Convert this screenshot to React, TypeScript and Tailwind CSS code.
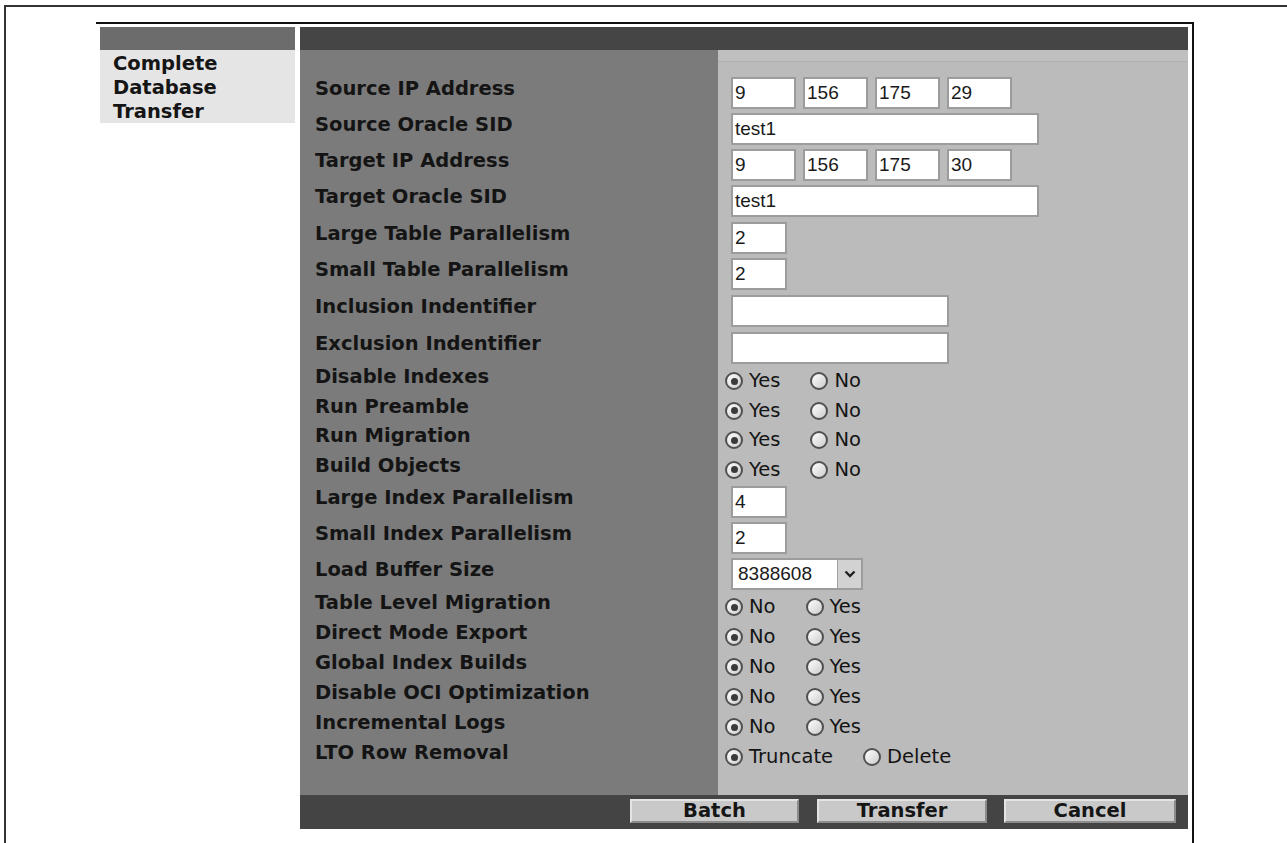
import React from "react";

const sans = "font-['DejaVu_Sans','Verdana',sans-serif]";
const arial = "font-['Liberation_Sans','Arial',sans-serif]";

function Box({ w, value }: { w: string; value: string }) {
  return (
    <input
      readOnly
      value={value}
      className={`${w} h-[32px] border-2 border-[#9c9c9c] bg-white pl-[2px] text-[19px] text-[#1a1a1a] ${arial} outline-none`}
    />
  );
}

function IpBoxes({ parts }: { parts: string[] }) {
  return (
    <div className="flex gap-[7px]">
      {parts.map((p, i) => (
        <Box key={i} w="w-[65px]" value={p} />
      ))}
    </div>
  );
}

function Radio({ checked, label }: { checked: boolean; label: string }) {
  return (
    <span className="flex items-center gap-[6px]">
      <span className="flex h-[18px] w-[18px] items-center justify-center rounded-full border-2 border-[#505050] bg-linear-to-br from-[#ffffff] to-[#cccccc]">
        {checked && <span className="h-[7px] w-[7px] rounded-full bg-[#3a3a3a]" />}
      </span>
      <span className={`${sans} text-[19.5px] leading-none text-[#141414]`}>{label}</span>
    </span>
  );
}

function RadioPair({ a, b }: { a: string; b: string }) {
  return (
    <div className="-ml-[6px] flex items-center gap-[30px]">
      <Radio checked label={a} />
      <Radio checked={false} label={b} />
    </div>
  );
}

function Select() {
  return (
    <div className="flex h-[32px] w-[132px] border-2 border-[#9c9c9c] bg-white">
      <span className={`flex-1 pl-[5px] text-[19px] leading-[28px] text-[#1a1a1a] ${arial}`}>8388608</span>
      <span className="flex w-[24px] items-center justify-center border-l border-[#a0a0a0] bg-[#d2d2d2]">
        <svg width="12" height="8" viewBox="0 0 12 8">
          <polyline points="1.5,1.5 6,6 10.5,1.5" fill="none" stroke="#222" strokeWidth="2.4" />
        </svg>
      </span>
    </div>
  );
}

type Row = { label: string; h: string; control: React.ReactNode };

const rows: Row[] = [
  { label: "Source IP Address", h: "h-[36px]", control: <IpBoxes parts={["9", "156", "175", "29"]} /> },
  { label: "Source Oracle SID", h: "h-[36px]", control: <Box w="w-[308px]" value="test1" /> },
  { label: "Target IP Address", h: "h-[36px]", control: <IpBoxes parts={["9", "156", "175", "30"]} /> },
  { label: "Target Oracle SID", h: "h-[36px]", control: <Box w="w-[308px]" value="test1" /> },
  { label: "Large Table Parallelism", h: "h-[37px]", control: <Box w="w-[56px]" value="2" /> },
  { label: "Small Table Parallelism", h: "h-[36px]", control: <Box w="w-[56px]" value="2" /> },
  { label: "Inclusion Indentifier", h: "h-[37px]", control: <Box w="w-[218px]" value="" /> },
  { label: "Exclusion Indentifier", h: "h-[37px]", control: <Box w="w-[218px]" value="" /> },
  { label: "Disable Indexes", h: "h-[30px]", control: <RadioPair a="Yes" b="No" /> },
  { label: "Run Preamble", h: "h-[29px]", control: <RadioPair a="Yes" b="No" /> },
  { label: "Run Migration", h: "h-[30px]", control: <RadioPair a="Yes" b="No" /> },
  { label: "Build Objects", h: "h-[29px]", control: <RadioPair a="Yes" b="No" /> },
  { label: "Large Index Parallelism", h: "h-[36px]", control: <Box w="w-[56px]" value="4" /> },
  { label: "Small Index Parallelism", h: "h-[36px]", control: <Box w="w-[56px]" value="2" /> },
  { label: "Load Buffer Size", h: "h-[36px]", control: <Select /> },
  { label: "Table Level Migration", h: "h-[30px]", control: <RadioPair a="No" b="Yes" /> },
  { label: "Direct Mode Export", h: "h-[30px]", control: <RadioPair a="No" b="Yes" /> },
  { label: "Global Index Builds", h: "h-[30px]", control: <RadioPair a="No" b="Yes" /> },
  { label: "Disable OCI Optimization", h: "h-[30px]", control: <RadioPair a="No" b="Yes" /> },
  { label: "Incremental Logs", h: "h-[30px]", control: <RadioPair a="No" b="Yes" /> },
  { label: "LTO Row Removal", h: "h-[30px]", control: <RadioPair a="Truncate" b="Delete" /> },
];

function Button({ w, children }: { w: string; children: React.ReactNode }) {
  return (
    <div
      className={`${w} flex h-[24px] items-center justify-center border-2 border-t-[#e4e4e4] border-l-[#e4e4e4] border-b-[#8c8c8c] border-r-[#8c8c8c] bg-[#c9c9c9] ${sans} text-[19.5px] font-bold leading-none text-[#151515]`}
    >
      {children}
    </div>
  );
}

export default function App() {
  return (
    <div className="h-[843px] w-[1287px] overflow-hidden bg-white pl-[4px] pt-[5px]">
      <div className="h-full border-l-2 border-t-2 border-[#333333] pl-[90px] pt-[15px]">
        <div className="flex h-[900px] w-[1098px] border-r-2 border-t-2 border-[#111111] px-[4px] pt-[3px]">
          {/* left navigation column */}
          <div className="w-[195px]">
            <div className="h-[23px] bg-[#6c6c6c]" />
            <div className={`h-[73px] bg-[#e5e5e5] pl-[13px] pt-[2px] ${sans} text-[19.5px] font-bold leading-[24px] text-[#151515]`}>
              <div>Complete</div>
              <div>Database</div>
              <div>Transfer</div>
            </div>
          </div>

          {/* form panel */}
          <div className="ml-[5px] w-[888px]">
            <div className="h-[23px] bg-[#454545]" />
            <div className="grid grid-cols-[418px_470px]">
              <div className="h-[25px] bg-[#7b7b7b]" />
              <div className="h-[25px] bg-[#bbbbbb]">
                <div className="h-[12px] border-b border-[#b0b0b0] bg-[#bfbfbf]" />
              </div>
              {rows.map((r) => (
                <React.Fragment key={r.label}>
                  <div className={`${r.h} flex items-center bg-[#7b7b7b] pl-[15px]`}>
                    <span className={`mb-[8px] ${sans} text-[19.5px] font-bold leading-none text-[#141414]`}>{r.label}</span>
                  </div>
                  <div className={`${r.h} flex items-center bg-[#bbbbbb] pl-[13px]`}>{r.control}</div>
                </React.Fragment>
              ))}
              <div className="h-[23px] bg-[#7b7b7b]" />
              <div className="h-[23px] bg-[#bbbbbb]" />
            </div>
            <div className="flex h-[34px] justify-end bg-[#444444] pr-[12px] pt-[4px]">
              <Button w="w-[169px]">Batch</Button>
              <div className="w-[18px]" />
              <Button w="w-[170px]">Transfer</Button>
              <div className="w-[17px]" />
              <Button w="w-[172px]">Cancel</Button>
            </div>
          </div>
        </div>
      </div>
    </div>
  );
}
